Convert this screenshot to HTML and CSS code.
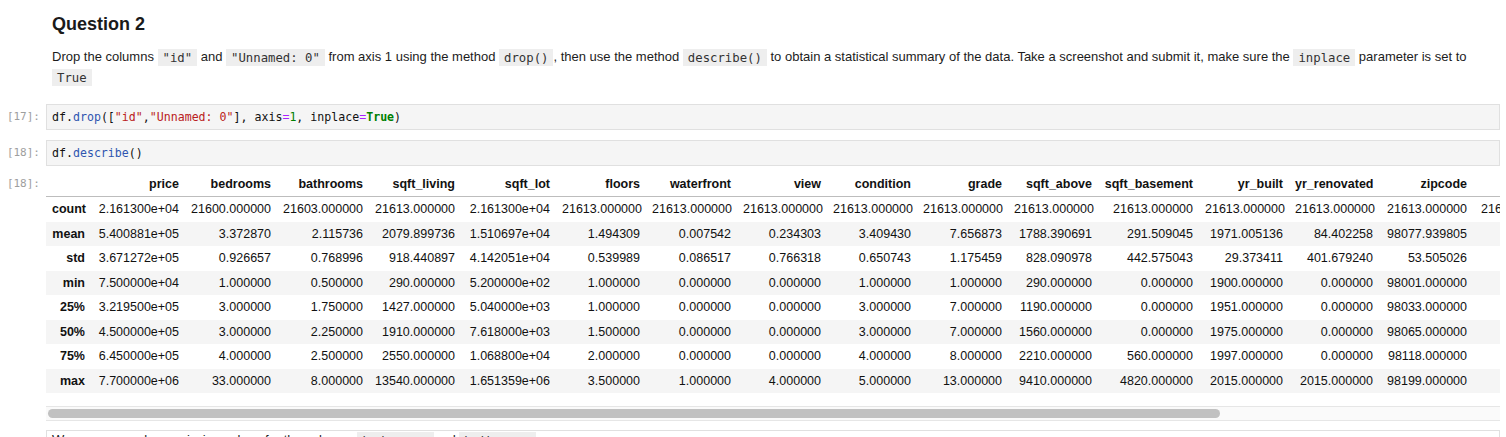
FILE: index.html
```html
<!DOCTYPE html>
<html>
<head>
<meta charset="utf-8">
<link rel="stylesheet" href="styles.css">
</head>
<body>
<div class="nb">
  <div class="cell md">
    <div class="prompt"></div>
    <div class="md-body">
      <h2>Question 2</h2>
      <p>Drop the columns <code>"id"</code> and <code>"Unnamed: 0"</code> from axis 1 using the method <code>drop()</code>, then use the method <code>describe()</code> to obtain a statistical summary of the data. Take a screenshot and submit it, make sure the <code>inplace</code> parameter is set to <code>True</code></p>
    </div>
  </div>

  <div class="cell code first">
    <div class="prompt">[17]:</div>
    <div class="input"><pre>df.<span class="fn">drop</span>([<span class="s">"id"</span>,<span class="s">"Unnamed: 0"</span>], axis<span class="o">=</span><span class="num">1</span>, inplace<span class="o">=</span><span class="kw">True</span>)</pre></div>
  </div>

  <div class="cell code">
    <div class="prompt">[18]:</div>
    <div class="input"><pre>df.<span class="fn">describe</span>()</pre></div>
  </div>

  <div class="cell out">
    <div class="prompt">[18]:</div>
    <div class="output">
      <div class="scroller">
        <table>
          <colgroup>
            <col class="w45"><col class="w94"><col class="w92"><col class="w92"><col class="w92"><col class="w95"><col class="w90"><col class="w91"><col class="w90"><col class="w90"><col class="w91"><col class="w90"><col class="w101"><col class="w90"><col class="w90"><col class="w94"><col class="w94"><col class="w94"><col class="w95"><col class="w95">
          </colgroup>
          <thead>
            <tr><th></th><th>price</th><th>bedrooms</th><th>bathrooms</th><th>sqft_living</th><th>sqft_lot</th><th>floors</th><th>waterfront</th><th>view</th><th>condition</th><th>grade</th><th>sqft_above</th><th>sqft_basement</th><th>yr_built</th><th>yr_renovated</th><th>zipcode</th><th>lat</th><th>long</th><th>sqft_living15</th><th>sqft_lot15</th></tr>
          </thead>
          <tbody>
            <tr><th>count</th><td>2.161300e+04</td><td>21600.000000</td><td>21603.000000</td><td>21613.000000</td><td>2.161300e+04</td><td>21613.000000</td><td>21613.000000</td><td>21613.000000</td><td>21613.000000</td><td>21613.000000</td><td>21613.000000</td><td>21613.000000</td><td>21613.000000</td><td>21613.000000</td><td>21613.000000</td><td>21613.000000</td><td>21613.000000</td><td>21613.000000</td><td>21613.000000</td></tr>
            <tr><th>mean</th><td>5.400881e+05</td><td>3.372870</td><td>2.115736</td><td>2079.899736</td><td>1.510697e+04</td><td>1.494309</td><td>0.007542</td><td>0.234303</td><td>3.409430</td><td>7.656873</td><td>1788.390691</td><td>291.509045</td><td>1971.005136</td><td>84.402258</td><td>98077.939805</td><td>47.560053</td><td>-122.213896</td><td>1986.552492</td><td>12768.455652</td></tr>
            <tr><th>std</th><td>3.671272e+05</td><td>0.926657</td><td>0.768996</td><td>918.440897</td><td>4.142051e+04</td><td>0.539989</td><td>0.086517</td><td>0.766318</td><td>0.650743</td><td>1.175459</td><td>828.090978</td><td>442.575043</td><td>29.373411</td><td>401.679240</td><td>53.505026</td><td>0.138564</td><td>0.140828</td><td>685.391304</td><td>27304.179631</td></tr>
            <tr><th>min</th><td>7.500000e+04</td><td>1.000000</td><td>0.500000</td><td>290.000000</td><td>5.200000e+02</td><td>1.000000</td><td>0.000000</td><td>0.000000</td><td>1.000000</td><td>1.000000</td><td>290.000000</td><td>0.000000</td><td>1900.000000</td><td>0.000000</td><td>98001.000000</td><td>47.155900</td><td>-122.519000</td><td>399.000000</td><td>651.000000</td></tr>
            <tr><th>25%</th><td>3.219500e+05</td><td>3.000000</td><td>1.750000</td><td>1427.000000</td><td>5.040000e+03</td><td>1.000000</td><td>0.000000</td><td>0.000000</td><td>3.000000</td><td>7.000000</td><td>1190.000000</td><td>0.000000</td><td>1951.000000</td><td>0.000000</td><td>98033.000000</td><td>47.471000</td><td>-122.328000</td><td>1490.000000</td><td>5100.000000</td></tr>
            <tr><th>50%</th><td>4.500000e+05</td><td>3.000000</td><td>2.250000</td><td>1910.000000</td><td>7.618000e+03</td><td>1.500000</td><td>0.000000</td><td>0.000000</td><td>3.000000</td><td>7.000000</td><td>1560.000000</td><td>0.000000</td><td>1975.000000</td><td>0.000000</td><td>98065.000000</td><td>47.571800</td><td>-122.230000</td><td>1840.000000</td><td>7620.000000</td></tr>
            <tr><th>75%</th><td>6.450000e+05</td><td>4.000000</td><td>2.500000</td><td>2550.000000</td><td>1.068800e+04</td><td>2.000000</td><td>0.000000</td><td>0.000000</td><td>4.000000</td><td>8.000000</td><td>2210.000000</td><td>560.000000</td><td>1997.000000</td><td>0.000000</td><td>98118.000000</td><td>47.678000</td><td>-122.125000</td><td>2360.000000</td><td>10083.000000</td></tr>
            <tr><th>max</th><td>7.700000e+06</td><td>33.000000</td><td>8.000000</td><td>13540.000000</td><td>1.651359e+06</td><td>3.500000</td><td>1.000000</td><td>4.000000</td><td>5.000000</td><td>13.000000</td><td>9410.000000</td><td>4820.000000</td><td>2015.000000</td><td>2015.000000</td><td>98199.000000</td><td>47.777600</td><td>-121.315000</td><td>6210.000000</td><td>871200.000000</td></tr>
          </tbody>
        </table>
      </div>
      <div class="hscroll"><div class="thumb"></div></div>
    </div>
  </div>

  <div class="cell md2">
    <div class="prompt"></div>
    <div class="md-edit">We can see we have missing values for the columns <code> bedrooms </code> and <code> bathrooms </code></div>
  </div>
</div>
</body>
</html>
```

FILE: styles.css
```css
html, body {
  margin: 0;
  background: #ffffff;
}
body {
  font-family: "Liberation Sans", Arial, sans-serif;
  color: #1c1c1c;
}
.nb {
  padding-right: 6px;
}
.cell {
  display: flex;
}
.prompt {
  width: 46px;
  flex: none;
  box-sizing: border-box;
  padding-right: 6px;
  text-align: right;
  font-family: "DejaVu Sans Mono", monospace;
  font-size: 11px;
  line-height: 26px;
  color: #9e9e9e;
}

/* markdown */
.md {
  padding-top: 12px;
}
.md-body {
  flex: 1;
  min-width: 0;
  padding-left: 6px;
}
.md-body h2 {
  margin: 0;
  font-size: 18px;
  line-height: 24px;
  font-weight: bold;
  color: #1a1a1a;
}
.md-body p {
  margin: 11px 0 0;
  font-size: 13px;
  line-height: 20px;
  color: #1c1c1c;
}
code {
  font-family: "DejaVu Sans Mono", monospace;
  font-size: 12.3px;
  background: #eeeeee;
  color: #333333;
  padding: 1.5px 5px;
}

/* code cells */
.code {
  margin-top: 10px;
}
.code.first {
  margin-top: 17px;
}
.input {
  flex: 1;
  min-width: 0;
  background: #f5f5f5;
  border: 1px solid #e0e0e0;
}
.input pre {
  margin: 0;
  padding: 4px 5px;
  font-family: "DejaVu Sans Mono", monospace;
  font-size: 11.6px;
  line-height: 16px;
  color: #111111;
}
.fn { color: #2f55b0; }
.s { color: #ba2121; }
.o { color: #aa22ff; }
.num { color: #008000; }
.kw { color: #008000; font-weight: bold; }

/* output */
.out {
  margin-top: 6px;
}
.out .prompt {
  line-height: 24px;
}
.output {
  flex: 1;
  min-width: 0;
  overflow: hidden;
}
.scroller {
  overflow: hidden;
}
table {
  border-collapse: collapse;
  table-layout: fixed;
  width: 1805px;
  font-size: 12.5px;
  color: #111111;
}
th, td {
  padding: 0 6px;
  text-align: right;
  white-space: nowrap;
  overflow: hidden;
}
thead th {
  height: 24px;
  line-height: 24px;
  border-bottom: 1px solid #bdbdbd;
  font-weight: bold;
}
tbody th, tbody td {
  height: 24.5px;
  line-height: 24.5px;
}
tbody th {
  font-weight: bold;
}
tbody tr:nth-child(even) {
  background: #f5f5f5;
}
.w45 { width: 45px; }
.w90 { width: 90px; }
.w91 { width: 91px; }
.w92 { width: 92px; }
.w94 { width: 94px; }
.w95 { width: 95px; }
.w101 { width: 101px; }

.hscroll {
  margin-top: 13px;
  height: 11px;
  padding-top: 2px;
  border-top: 1px solid #e6e6e6;
  border-bottom: 1px solid #e6e6e6;
  background: #fafafa;
}
.thumb {
  width: 1172px;
  height: 9px;
  margin-left: 2px;
  background: #c1c1c1;
  border-radius: 5px;
}

/* partially visible next cell */
.md2 {
  margin-top: 9px;
}
.md-edit {
  flex: 1;
  min-width: 0;
  border: 1px solid #e0e0e0;
  padding: 1px 5px 10px;
  font-size: 13px;
  line-height: 16px;
  color: #1c1c1c;
}
```
